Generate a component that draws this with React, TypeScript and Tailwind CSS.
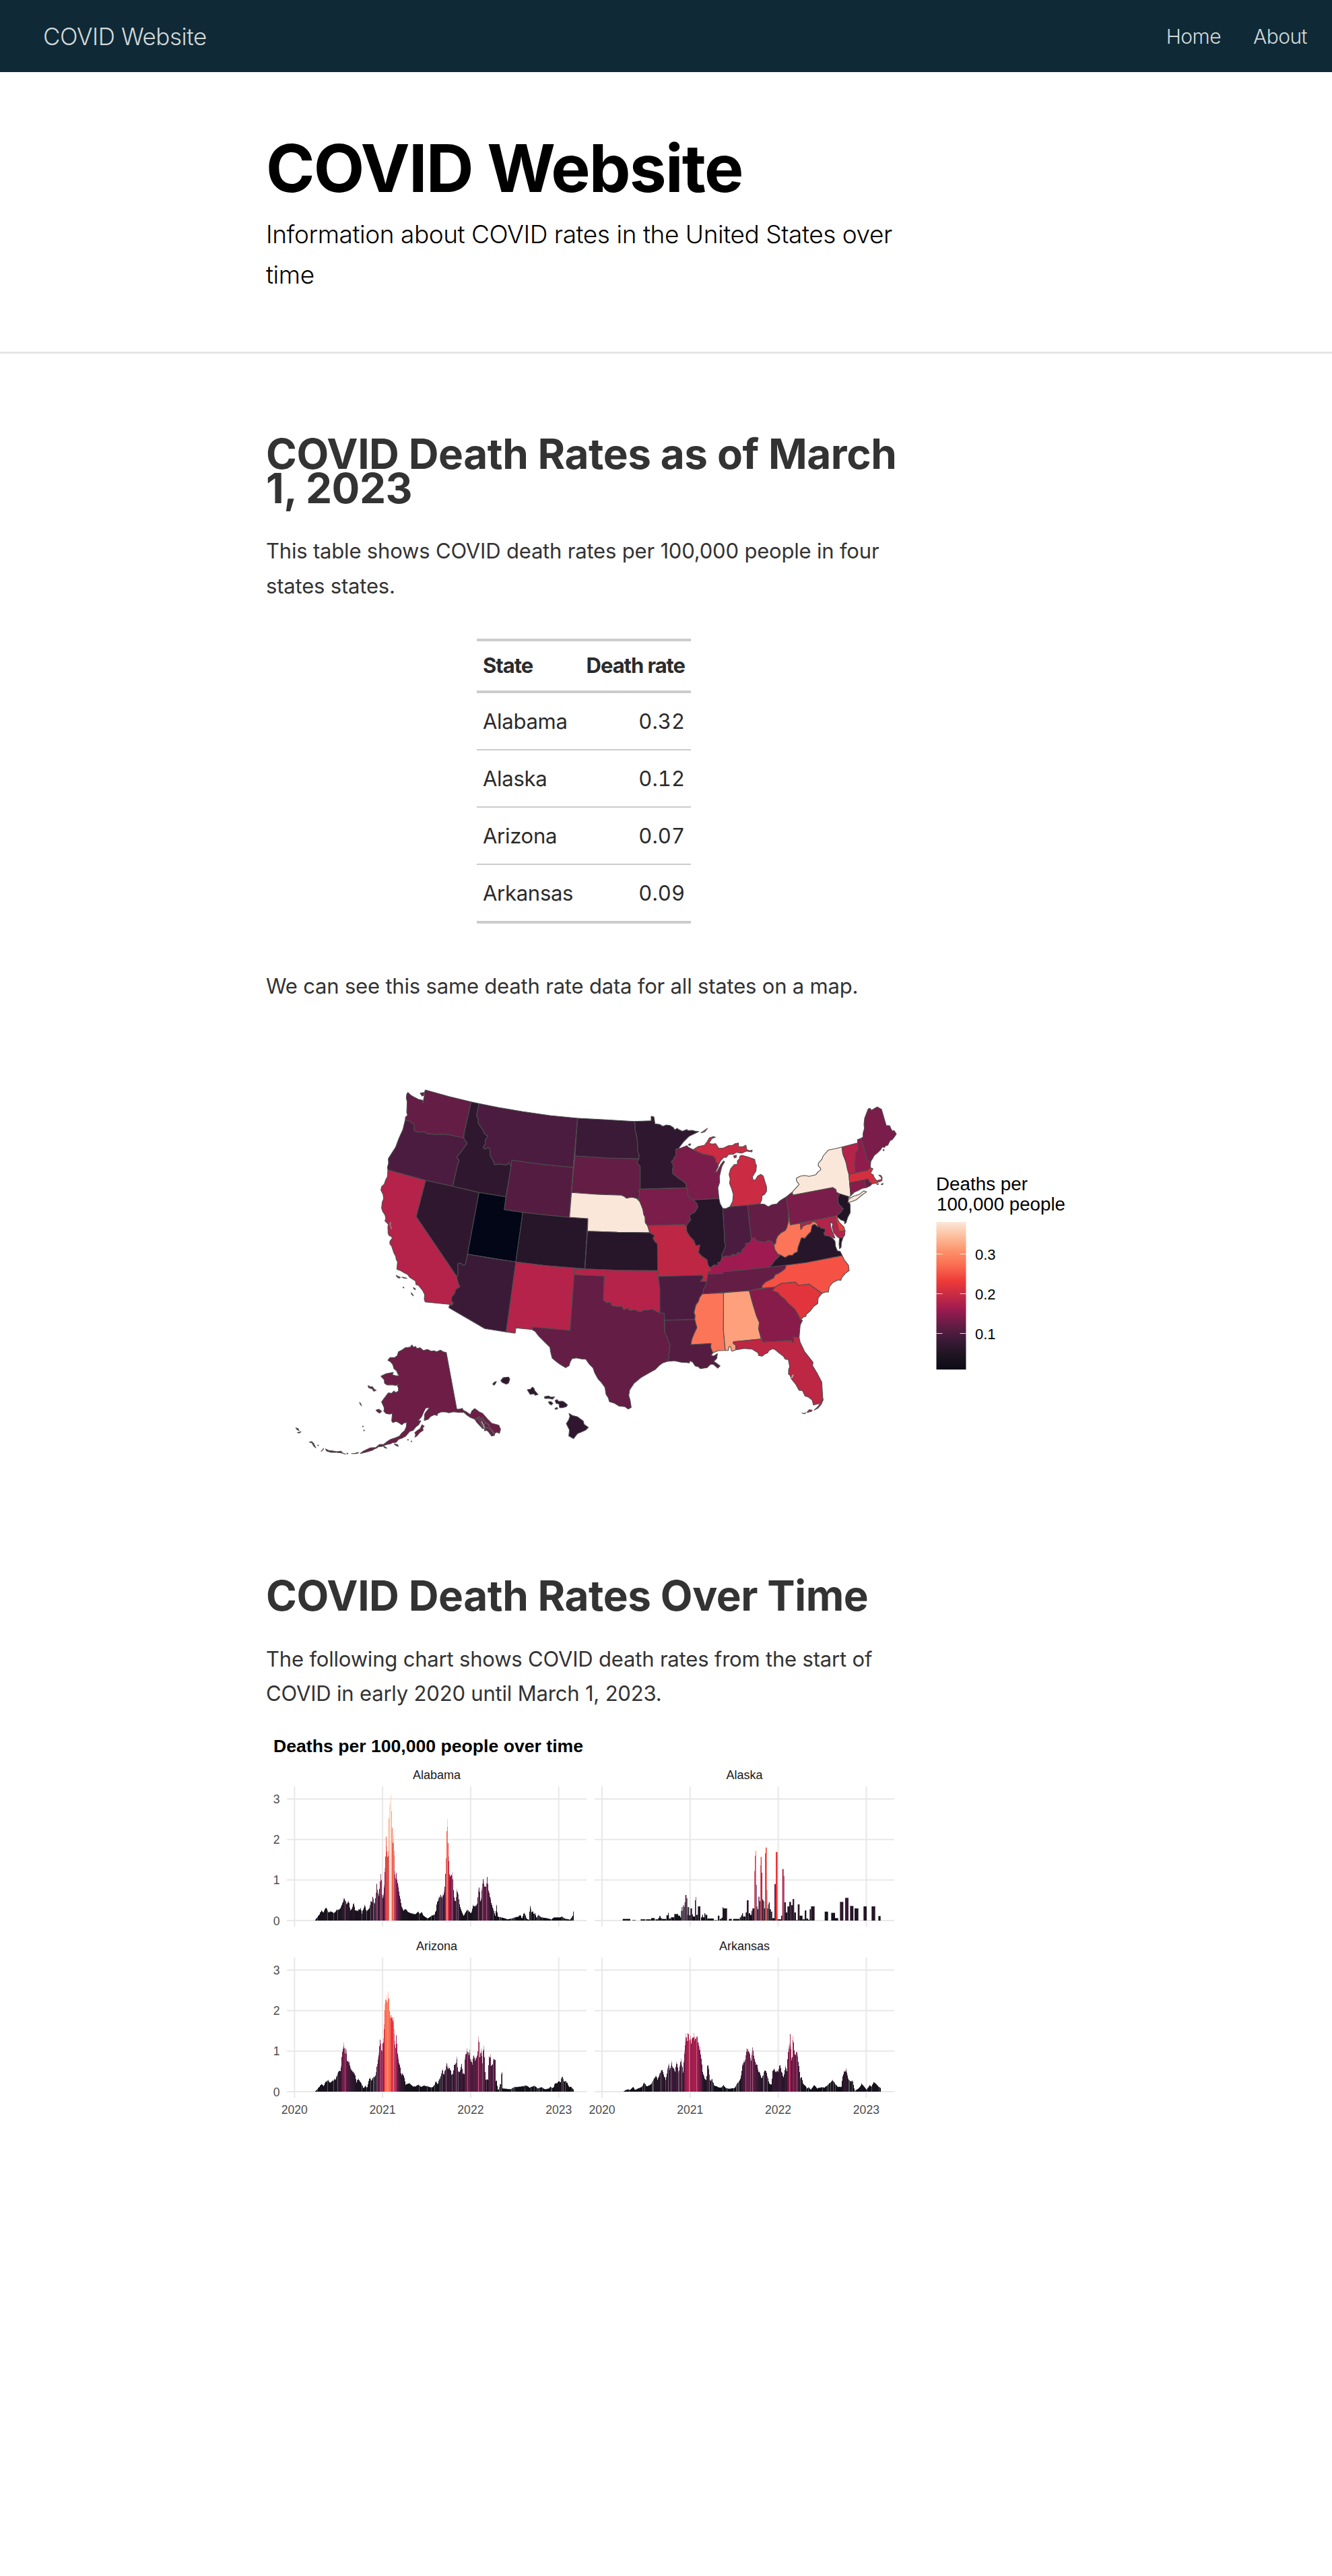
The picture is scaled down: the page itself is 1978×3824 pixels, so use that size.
import React from "react";

type Shape = { n: string; f: string; d: string };

// Each group of outlines is drafted on its own tile of the map sheet.
const tiles: { x: number; y: number; shapes: Shape[] }[] = [
  {
    x: 0,
    y: 0,
    shapes: [
      { n: "WA", f: "#641d45", d: "617,125 612,133 610,150 614,165 613,190 612,215 616,226 606,236 606,245 613,251 625,252 633,260 643,264 646,280 643,292 657,301 675,302 690,299 703,310 715,309 738,313 765,311 795,313 866,328 868,305 899,167 800,143 695,114 691,125 690,142 684,172 682,160 665,156 645,146 630,137" },
      { n: "WA-I", f: "#641d45", d: "672,128 688,125 688,138 680,141" },
      { n: "OR", f: "#4b1c40", d: "606,245 613,251 625,252 633,260 643,264 646,280 643,292 657,301 675,302 690,299 703,310 715,309 738,313 765,311 795,313 866,328 870,336 880,348 880,354 862,378 850,396 837,409 837,417 846,428 838,450 817,543 696,517 528,470 526,460 531,440 530,420 545,396 562,370 577,330 595,290" },
      { n: "ID", f: "#2f182f", d: "899,167 934,175 923,228 930,240 931,264 950,290 960,310 973,318 961,340 963,352 953,370 960,377 977,370 984,385 984,405 990,418 997,430 1003,447 1025,443 1045,447 1060,446 1067,437 1077,455 1054,590 934,571 817,543 838,450 846,428 837,417 837,409 850,396 862,378 880,354 880,348 870,336 866,328 868,305" },
      { n: "MT", f: "#4b1c40", d: "934,175 1020,192 1130,211 1250,228 1373,240 1354,459 1220,446 1081,427 1077,455 1067,437 1060,446 1045,447 1025,443 1003,447 997,430 990,418 984,405 984,385 977,370 960,377 953,370 963,352 961,340 973,318 960,310 950,290 931,264 930,240 923,228" },
      { n: "WY", f: "#551c41", d: "1081,427 1220,446 1354,459 1345,571 1336,681 1240,672 1129,659 1046,647" },
      { n: "NV", f: "#2f182f", d: "696,517 817,543 934,571 883,845 874,890 866,895 850,885 840,888 840,940 835,945 654,678" },
      { n: "UT", f: "#020617", d: "934,571 1054,590 1046,647 1129,659 1098,880 883,845" },
      { n: "CO", f: "#27152a", d: "1129,659 1240,672 1336,681 1419,687 1405,910 1360,907 1230,896 1098,880" },
      { n: "CA", f: "#b5234a", d: "528,470 696,517 654,678 835,945 838,960 843,977 849,990 830,1003 826,1020 812,1037 811,1055 819,1060 817,1070 694,1058 690,1045 692,1025 683,1007 665,985 653,980 651,965 635,955 625,948 615,935 600,928 585,919 568,913 571,880 565,868 563,855 555,840 545,810 537,800 537,788 547,775 545,767 534,763 529,752 528,725 530,712 515,697 519,686 515,670 505,655 500,640 503,613 509,600 507,580 497,560 500,545 512,533 518,515 526,500" },
      { n: "AZ", f: "#3b1a38", d: "883,845 990,864 1098,880 1055,1192 960,1177 800,1084 802,1073 817,1070 819,1060 811,1055 812,1037 826,1020 830,1003 849,990 843,977 838,960 835,945 840,940 840,888 850,885 866,895 874,890" },
      { n: "NM", f: "#b5234a", d: "1098,880 1230,896 1361,907 1340,1185 1172,1170 1174,1181 1098,1174 1095,1197 1055,1192" },
      { n: "CI1", f: "#b5234a", d: "565,940 575,945 583,948 581,952 572,950" },
      { n: "CI2", f: "#b5234a", d: "590,948 600,949 613,953 600,952" },
      { n: "CI3", f: "#b5234a", d: "642,994 650,999 650,1004 643,999" },
      { n: "CI4", f: "#b5234a", d: "632,1017 640,1027 641,1031 634,1024" },
      { n: "CI5", f: "#b5234a", d: "595,992 600,993 598,996" },
    ],
  },
  {
    x: 1260,
    y: 0,
    shapes: [
      { n: "ND", f: "#3b1a38", d: "113,240 240,247 366,254 370,270 369,290 376,315 380,345 381,385 388,405 386,421 240,417 101,408" },
      { n: "SD", f: "#641d45", d: "101,408 240,417 386,421 377,438 392,454 392,556 386,562 390,580 385,601 374,596 355,592 330,596 322,589 308,583 200,579 86,571" },
      { n: "NE", f: "#fbe7d9", d: "86,571 200,579 308,583 322,589 330,596 355,592 374,596 392,612 396,625 404,645 408,668 414,680 415,705 425,718 435,750 290,748 157,743 159,687 77,681" },
      { n: "KS", f: "#27152a", d: "157,743 290,748 435,750 445,756 457,762 449,774 458,790 469,799 470,919 300,917 146,911" },
      { n: "MN", f: "#2f182f", d: "366,254 441,251 441,231 453,234 458,265 480,268 493,276 508,270 525,272 540,282 546,292 556,285 565,291 580,298 600,290 605,295 625,294 635,297 653,299 610,320 585,345 562,375 551,378 551,408 544,413 540,425 531,433 540,450 536,470 538,488 550,496 563,507 580,518 595,531 599,550 392,556 392,454 377,438 386,421 388,405 381,385 380,345 376,315 369,290 370,270" },
      { n: "IA", f: "#7a1d4a", d: "386,556 599,550 605,565 603,577 610,592 629,604 645,620 649,635 636,658 615,670 612,680 618,692 603,710 598,722 588,713 425,718 415,705 414,680 408,668 404,645 396,625 385,601 390,580" },
      { n: "MO", f: "#bd2744", d: "425,718 588,713 598,722 600,745 615,768 632,785 640,808 658,804 652,838 668,855 690,870 695,895 708,906 708,932 694,934 690,965 660,967 674,949 667,939 473,945 470,919 469,799 458,790 449,774 457,762 445,756 435,750" },
      { n: "WI", f: "#7a1d4a", d: "551,378 575,372 600,362 607,370 628,380 650,390 672,400 700,405 715,407 728,420 728,435 738,440 740,455 732,470 725,484 735,476 745,458 752,445 764,430 768,434 757,452 752,470 745,500 746,525 738,550 743,598 629,604 610,592 603,577 605,565 599,550 595,531 580,518 563,507 550,496 538,488 536,470 540,450 531,433 540,425 544,413 551,408" },
      { n: "IL", f: "#27152a", d: "629,604 743,598 748,620 760,642 768,770 767,790 773,805 765,830 756,845 756,862 750,880 739,882 738,897 725,893 715,897 706,907 695,895 690,870 668,855 652,838 658,804 640,808 632,785 615,768 600,745 598,722 603,710 618,692 612,680 615,670 636,658 649,635 645,620" },
      { n: "IN", f: "#4b1c40", d: "760,642 775,642 792,634 870,627 887,773 885,788 875,797 863,797 862,812 848,824 842,840 828,838 818,850 805,845 793,856 778,853 756,860 756,845 765,830 773,805 767,790 768,770" },
      { n: "MI-U", f: "#cb2b43", d: "628,380 650,366 678,360 690,345 700,328 718,322 727,325 712,330 698,352 712,355 728,353 742,374 765,372 785,362 805,360 815,353 830,350 830,366 850,367 863,360 867,380 880,385 891,382 890,390 865,386 845,395 820,392 808,400 785,402 775,415 765,413 750,430 737,455 738,440 728,435 728,420 715,407 700,405 672,400 650,390" },
      { n: "IR", f: "#cb2b43", d: "663,305 680,293 692,285 680,300" },
      { n: "BI", f: "#cb2b43", d: "808,408 820,404 820,414 812,417" },
      { n: "AP", f: "#7a1d4a", d: "607,357 615,353 617,358 611,362" },
    ],
  },
  {
    x: 1260,
    y: 810,
    shapes: [
      { n: "TX", f: "#641d45", d: "98,127 232,133 228,240 243,252 260,249 265,263 280,267 295,268 310,268 320,283 335,276 347,286 358,284 365,282 378,288 392,292 410,284 425,284 445,280 465,290 480,297 499,298 501,385 512,405 516,420 527,440 522,455 523,470 518,480 521,495 512,513 492,520 478,530 460,548 430,565 395,585 365,610 345,640 341,665 347,685 352,718 338,725 325,715 298,712 275,698 255,692 250,675 240,660 235,628 218,605 205,592 190,565 182,542 165,525 150,503 130,502 107,497 88,501 80,515 75,532 60,541 35,526 20,515 0,498 -7,470 -10,450 -35,425 -60,400 -75,380 -88,372 -88,360 80,375" },
      { n: "OK", f: "#b5234a", d: "103,100 146,101 300,107 470,109 473,135 480,190 480,297 465,290 445,280 425,284 410,284 392,292 378,288 365,282 358,284 347,286 335,276 320,283 310,268 295,268 280,267 265,263 260,249 243,252 228,240 232,133 98,127" },
      { n: "AR", f: "#4b1c40", d: "473,135 667,129 674,139 660,157 690,156 686,172 675,192 672,212 657,228 652,245 640,262 632,295 637,310 635,326 501,330 499,298 480,297 480,190" },
      { n: "LA", f: "#551c41", d: "501,330 635,326 645,362 632,390 622,415 618,438 708,433 706,450 716,475 708,487 720,489 736,478 733,500 720,513 733,522 748,533 738,543 732,538 718,526 705,526 690,541 660,545 650,536 637,533 625,515 612,510 612,520 600,518 575,517 545,510 512,513 521,495 518,480 523,470 522,455 527,440 516,420 512,405 501,385" },
      { n: "MS", f: "#fc7559", d: "669,212 764,208 763,375 771,464 740,465 716,475 706,450 708,433 618,438 622,415 632,390 645,362 635,326 637,310 632,295 640,262 652,245 657,228" },
      { n: "AL", f: "#ffa07c", d: "766,207 878,198 890,245 910,310 923,340 920,370 927,395 930,413 808,425 806,432 818,440 817,462 803,467 798,465 795,448 788,447 785,464 771,464 763,375 763,212" },
    ],
  },
  {
    x: 2040,
    y: 780,
    shapes: [
      { n: "KY", f: "#9e1a50", d: "-72,127 -65,117 -55,113 -42,117 -41,102 -30,100 -24,80 -2,73 13,76 25,65 38,70 48,58 62,60 68,44 82,32 83,17 95,17 105,8 107,-7 122,-8 130,4 150,10 165,13 185,3 205,18 208,28 212,45 225,63 235,68 212,93 200,112 182,124 60,137 -18,144 -20,152 -86,154 -86,145 -72,142" },
      { n: "TN", f: "#641d45", d: "-86,154 -20,152 -18,144 60,137 182,124 262,114 258,130 243,142 225,153 215,155 206,172 185,182 170,190 155,206 155,216 98,227 -108,242 -106,222 -94,202" },
      { n: "NC", f: "#f55145", d: "155,216 155,206 170,190 185,182 206,172 215,155 225,153 243,142 258,130 262,114 350,103 512,71 522,92 540,115 543,138 525,152 510,170 506,182 493,180 470,192 455,210 450,235 440,233 422,240 365,199 315,205 309,194 300,190 240,196 212,212" },
      { n: "SC", f: "#e1343c", d: "212,212 240,196 300,190 309,194 315,205 365,199 422,240 405,260 403,285 386,297 370,318 352,333 350,343 340,345 328,357 313,330 300,310 275,288 255,265 237,252 225,237 200,228" },
      { n: "GA", f: "#871c4a", d: "98,227 155,218 212,212 200,228 225,237 237,252 255,265 275,288 300,310 313,330 326,357 335,360 325,380 323,400 320,437 294,434 297,455 290,460 285,449 158,457 147,425 140,400 143,370 130,340 115,290" },
      { n: "FL", f: "#bd2744", d: "28,455 150,443 158,457 285,449 290,460 297,455 294,434 320,437 325,458 345,500 382,547 380,562 400,595 421,635 425,700 427,715 418,730 400,733 384,737 378,715 362,702 346,697 335,673 320,672 305,645 285,620 280,605 273,600 273,580 278,567 272,535 258,533 250,520 230,505 212,490 200,487 185,495 180,505 167,510 155,520 140,517 137,505 110,488 75,485 40,491 38,470 28,465" },
      { n: "K1", f: "#bd2744", d: "427,713 418,735 405,750 387,760 403,745" },
      { n: "K2", f: "#bd2744", d: "355,770 365,758 378,760 375,766" },
      { n: "K3", f: "#bd2744", d: "333,773 345,776 350,772 342,775" },
    ],
  },
  {
    x: 2040,
    y: 60,
    shapes: [
      { n: "OH", f: "#641d45", d: "90,567 145,561 165,563 183,574 200,565 220,562 235,547 263,530 273,605 273,640 265,668 258,680 240,690 225,705 217,722 215,740 207,742 205,735 185,723 165,733 150,730 130,724 122,712 107,715" },
      { n: "MI-L", f: "#cb2b43", d: "12,574 24,550 27,520 20,495 10,470 13,450 8,430 15,405 30,387 45,385 45,370 55,360 55,350 65,345 90,352 122,363 125,380 130,390 128,415 112,440 115,455 125,455 135,438 150,430 160,437 170,470 175,485 175,505 165,520 155,525 153,545 145,561 90,567" },
      { n: "VA", f: "#27152a", d: "182,844 200,832 212,813 237,789 258,800 275,790 290,790 300,780 312,775 315,755 330,712 345,715 360,697 372,685 378,657 390,652 403,664 412,658 415,668 435,673 437,683 430,692 435,702 455,705 470,715 480,728 482,750 490,770 503,773 512,791 350,823 262,834" },
      { n: "VA-E", f: "#27152a", d: "500,712 516,710 508,735 507,755 500,761 498,740" },
      { n: "WV", f: "#fc7559", d: "271,603 281,655 325,648 328,675 338,660 355,652 370,650 380,640 393,642 403,652 403,664 390,652 378,657 372,685 360,697 345,715 330,712 315,755 312,775 300,780 290,790 275,790 258,800 237,789 225,785 212,765 208,745 217,735 217,722 225,705 240,690 258,680 265,668 273,640" },
      { n: "MD", f: "#b5234a", d: "325,648 482,615 498,685 525,680 523,700 516,710 500,714 490,708 485,702 475,690 467,665 470,650 462,645 466,632 459,645 461,665 468,685 475,700 480,714 468,710 455,705 435,702 430,692 437,683 435,673 415,668 412,658 403,664 403,652 393,642 380,640 370,650 355,652 338,660 328,675" },
      { n: "DE", f: "#e83b3d", d: "481,614 490,612 490,625 500,645 520,665 524,681 498,685" },
      { n: "PA", f: "#7a1d4a", d: "263,530 290,508 292,522 470,488 484,497 487,510 500,517 492,540 497,563 517,583 505,600 490,612 481,615 281,655" },
      { n: "NJ", f: "#201426", d: "500,516 541,529 538,553 547,562 548,600 537,620 529,645 523,650 522,638 505,632 490,619 490,612 505,600 517,583 497,563 492,540" },
      { n: "NY", f: "#fbe7d9", d: "292,522 290,508 320,475 308,458 308,447 325,438 345,435 365,439 395,431 405,418 416,410 416,403 405,392 406,380 422,362 427,348 450,322 480,316 511,308 515,340 525,365 530,380 535,405 542,430 545,467 550,520 545,533 541,529 500,516 487,510 484,497 470,488" },
      { n: "NY-L", f: "#fbe7d9", d: "540,541 560,528 590,518 608,503 620,508 600,522 575,543 552,552 537,556" },
      { n: "CT", f: "#871c4a", d: "545,467 612,453 618,489 600,493 580,503 565,510 550,525" },
      { n: "RI", f: "#641d45", d: "612,453 628,450 632,460 645,472 638,480 618,490" },
      { n: "MA", f: "#d52f3f", d: "542,430 625,412 637,400 649,405 638,425 650,432 655,445 665,458 687,452 687,445 675,433 685,435 690,445 689,458 672,465 660,470 645,472 632,460 628,450 545,467" },
      { n: "VT", f: "#b5234a", d: "511,308 581,290 584,322 571,335 571,355 568,385 572,422 542,430 535,405 530,380 525,365 515,340" },
      { n: "NH", f: "#911b4c", d: "581,290 580,275 595,270 607,305 622,360 638,383 637,400 625,412 572,422 568,385 571,355 571,335 584,322" },
      { n: "ME", f: "#7a1d4a", d: "595,270 605,264 605,247 611,225 609,208 612,180 628,138 636,136 642,145 668,130 687,140 708,212 723,213 730,228 735,237 743,235 753,250 745,262 735,275 725,280 715,300 705,303 700,310 690,308 683,320 670,333 655,345 648,358 640,370 638,383 622,360 607,305" },
      { n: "I1", f: "#7a1d4a", d: "694,319 699,322 696,325" },
      { n: "I2", f: "#d52f3f", d: "665,472 675,472 670,476" },
      { n: "I3", f: "#d52f3f", d: "685,474 694,470 692,476" },
    ],
  },
  {
    x: 0,
    y: 900,
    shapes: [
      { n: "AK", f: "#6d1d46", d: "635,350 643,360 652,356 656,365 672,362 685,374 705,370 720,377 735,376 745,380 762,373 775,380 788,383 835,636 847,635 860,632 863,640 878,648 895,660 903,643 915,633 935,648 950,655 972,680 990,698 1022,707 1030,725 1025,743 1012,738 1003,745 1003,752 990,755 975,735 965,728 960,733 957,720 950,722 925,695 915,680 895,672 880,662 867,650 845,650 820,647 800,652 785,648 765,648 750,655 747,664 735,660 718,668 708,680 690,686 692,655 712,630 705,628 695,637 685,655 685,662 663,686 675,688 665,705 652,715 640,730 625,735 608,755 590,765 575,770 565,783 548,785 540,790 523,793 510,798 500,802 485,803 480,808 470,812 460,818 430,827 405,833 420,822 450,808 475,806 490,793 510,792 525,780 540,770 565,762 580,755 590,742 602,732 610,715 612,695 600,697 590,705 575,695 565,690 550,695 545,688 548,655 535,658 520,655 510,645 512,630 500,603 508,592 515,583 530,563 545,565 555,555 563,562 575,555 575,540 570,532 577,523 563,530 550,527 525,528 513,520 512,505 497,489 520,478 552,472 548,482 560,486 578,487 572,478 567,465 555,455 550,437 540,425 528,418 537,406 560,405 570,397 575,380 590,373 605,362 628,359" },
      { n: "AK1", f: "#6d1d46", d: "648,740 660,730 672,722 680,705 690,712 683,718 685,730 670,740 657,755 648,760 652,750" },
      { n: "AK2", f: "#6d1d46", d: "440,530 450,537 458,535 468,548 476,551 466,556 458,545 442,540" },
      { n: "AK3", f: "#6d1d46", d: "475,640 488,636 500,645 492,653 482,648" },
      { n: "AK4", f: "#6d1d46", d: "402,605 407,612 411,620 405,614" },
      { n: "AK5", f: "#6d1d46", d: "118,719 128,722 132,731 124,727" },
      { n: "AK6", f: "#6d1d46", d: "125,740 133,738 141,736 133,742" },
      { n: "AK7", f: "#6d1d46", d: "178,782 188,780 197,788 203,800 207,808 198,800 190,786" },
      { n: "AK8", f: "#6d1d46", d: "230,823 240,815 241,810 236,820" },
      { n: "AK9", f: "#6d1d46", d: "250,813 265,820 285,822 300,825 320,823 325,830 340,836 320,830 300,828 275,828 255,822" },
      { n: "AK10", f: "#6d1d46", d: "366,833 378,834 385,831 398,829 390,833" },
      { n: "AK11", f: "#6d1d46", d: "415,711 419,712 416,714" },
      { n: "AK12", f: "#6d1d46", d: "420,728 424,731 421,732" },
      { n: "AK13", f: "#6d1d46", d: "508,800 518,805 523,810 512,806" },
      { n: "AK14", f: "#6d1d46", d: "556,790 572,794 574,801 565,798" },
      { n: "AK15", f: "#6d1d46", d: "632,777 635,779 632,781" },
      { n: "AK16", f: "#6d1d46", d: "617,770 620,773 616,773" },
      { n: "AK17", f: "#6d1d46", d: "345,832 350,832 347,835" },
      { n: "AK18", f: "#6d1d46", d: "215,796 219,796 217,799" },
      { n: "HI1", f: "#2f182f", d: "995,524 1003,515 1011,512 1008,520 1001,529" },
      { n: "HI2", f: "#2f182f", d: "1031,508 1042,495 1066,493 1071,502 1065,520 1055,524 1038,517" },
      { n: "HI3", f: "#2f182f", d: "1149,549 1163,547 1172,537 1180,545 1182,553 1197,570 1185,574 1178,567 1162,570" },
      { n: "HI4", f: "#2f182f", d: "1226,580 1245,577 1252,582 1271,581 1262,591 1245,587 1227,588" },
      { n: "HI5", f: "#2f182f", d: "1243,603 1255,602 1263,610 1256,617 1248,612" },
      { n: "HI6", f: "#2f182f", d: "1273,597 1282,593 1288,601 1305,600 1315,605 1328,617 1322,625 1305,629 1293,629 1290,612 1278,610" },
      { n: "HI7", f: "#2f182f", d: "1272,633 1281,628 1285,633 1277,637" },
      { n: "HI8", f: "#2f182f", d: "1335,655 1350,664 1373,670 1398,688 1402,703 1421,717 1410,728 1390,737 1372,745 1355,767 1334,755 1337,728 1323,700 1333,685 1339,668" },
    ],
  },
];

// Inner straits of the Alaskan panhandle and small bays.
const inlets = [
  "M915,1582 L935,1570 L948,1590 L955,1605 L962,1625",
  "M928,1575 L940,1595 L948,1615 L957,1620",
  "M948,1572 L960,1592 L975,1605 L985,1622 L1005,1645",
  "M950,1610 L965,1598 L980,1604",
  "M962,1615 L985,1625 L1003,1650",
];

const ramp = [
  [12, 11, 22], [29, 21, 32], [59, 26, 56], [100, 29, 69], [154, 26, 80], [197, 42, 69],
  [238, 58, 56], [249, 106, 80], [253, 144, 105], [253, 189, 155], [251, 231, 217],
];

function tone(v: number) {
  const t = Math.min(0.9999, Math.max(0, v / 3.15)) * 10;
  const i = Math.floor(t);
  const c = ramp[i].map((a, k) => Math.round(a + (ramp[i + 1][k] - a) * (t - i)));
  return `rgb(${c[0]},${c[1]},${c[2]})`;
}

function DeathMap() {
  return (
    <svg className="block h-[760px] w-[1227px]" viewBox="395 1500 1227 760">
      <defs>
        <linearGradient id="ramp" x1="0" y1="1" x2="0" y2="0">
          {ramp.map((c, i) => (
            <stop key={i} offset={i / 10} stopColor={`rgb(${c[0]},${c[1]},${c[2]})`} />
          ))}
        </linearGradient>
      </defs>
      <g transform="translate(400 1580) scale(0.33333)" stroke="#4d4d4d" strokeWidth="3.2" strokeLinejoin="round">
        {tiles.map((t, i) => (
          <g key={i} transform={`translate(${t.x} ${t.y})`}>
            {t.shapes.map((s) => (
              <polygon key={s.n} points={s.d} fill={s.f} />
            ))}
          </g>
        ))}
        <g fill="none">
          {inlets.map((d, i) => (
            <path key={i} d={d} stroke="#5a5556" strokeWidth="5" />
          ))}
          <path d="M945,1590 L953,1606 L958,1619" stroke="#ddd" strokeWidth="3" />
          <path d="M700,1532 L690,1552 L682,1570" stroke="#fff" strokeWidth="5" />
        </g>
        <path d="M541,703 L537,712 L541,720 M540,722 L545,733" fill="none" stroke="#999" strokeWidth="4" />
        <path d="M2326,1398 L2334,1382" fill="none" stroke="#aaa" strokeWidth="6" />
      </g>
      <g fontFamily="'Liberation Sans', Arial, sans-serif" fill="#000">
        <text x="1390" y="1767" fontSize="27" textLength="136" lengthAdjust="spacingAndGlyphs">Deaths per</text>
        <text x="1391" y="1797" fontSize="27" textLength="191" lengthAdjust="spacingAndGlyphs">100,000 people</text>
        <rect x="1390.5" y="1814" width="44" height="219" fill="url(#ramp)" />
        {[["0.3", 1861.5], ["0.2", 1920.5], ["0.1", 1979.5]].map(([s, y]) => (
          <g key={s}>
            <path d={`M1390.5,${y} h9 M1425.5,${y} h9`} stroke="#fff" strokeOpacity="0.85" strokeWidth="1" />
            <text x="1448" y={Number(y) + 8} fontSize="22">{s}</text>
          </g>
        ))}
      </g>
    </svg>
  );
}

// Pairs of (time position in chart units, rate); 392.4 units make one year.
type Series = { name: string; steps?: boolean; pts: number[] };

const alabama: Series = {
  name: "Alabama",
  pts: [232,0, 240,.06, 250,.13, 262,.25, 270,.2, 282,.34, 292,.2, 305,.23, 320,.18, 330,.27, 340,.26, 350,.34, 357,.48, 366,.55, 373,.4, 383,.5, 390,.25, 398,.3, 405,.46, 412,.25, 425,.25, 436,.3, 442,.18, 448,.28, 455,.38, 463,.22, 475,.3, 482,.5, 486,.42, 491,.62, 498,.35, 508,.88, 516,.58, 520,.8, 527,1.24, 531,.72, 536,.5, 541,.85, 545,1.32, 550,2.1, 554,1.6, 560,1.55, 562,2.6, 566,3.15, 572,3, 576,2.45, 579,1.95, 584,2.1, 587,1.3, 590,1.0, 594,1.18, 600,.98, 607,.75, 614,.5, 620,.33, 628,.24, 636,.3, 650,.2, 665,.17, 680,.16, 692,.22, 700,.16, 708,.22, 716,.12, 735,.05, 750,.11, 765,.15, 772,.25, 776,.45, 784,.55, 792,.63, 800,.55, 808,.7, 813,.9, 815,1.55, 819,1.55, 821,2.75, 825,2.05, 828,1.55, 832,1.2, 838,1.1, 842,1.22, 848,.95, 852,.6, 858,.45, 866,.74, 871,.66, 876,.42, 885,.25, 895,.12, 905,.22, 911,.27, 920,.22, 930,.18, 936,.36, 946,.36, 954,.38, 960,.72, 966,.84, 971,.4, 976,.75, 980,1.06, 988,.84, 996,.9, 1000,1.05, 1005,.8, 1012,.62, 1020,.4, 1028,.27, 1036,.12, 1042,.36, 1047,.1, 1060,.08, 1075,.06, 1090,.03, 1110,.05, 1125,.08, 1140,.1, 1148,.15, 1155,.04, 1163,.2, 1170,.14, 1176,.04, 1186,.02, 1191,.38, 1198,.2, 1203,.26, 1206,.17, 1214,.18, 1220,.06, 1228,.14, 1240,.08, 1265,.06, 1285,.03, 1300,.08, 1325,.08, 1332,.1, 1345,.05, 1370,.02, 1376,.08, 1382,.12, 1386,.3],
};

const arizona: Series = {
  name: "Arizona",
  pts: [232,0, 242,.05, 252,.12, 262,.19, 272,.14, 280,.25, 292,.27, 300,.22, 312,.28, 325,.3, 333,.44, 340,.5, 348,.52, 352,.85, 357,1.12, 362,1.1, 367,1.0, 371,1.05, 376,.78, 384,.75, 390,.6, 398,.52, 406,.48, 412,.4, 418,.23, 423,.32, 433,.26, 442,.17, 450,.08, 458,.15, 465,.08, 471,.24, 477,.35, 484,.27, 493,.36, 500,.34, 508,.6, 515,.8, 519,1.1, 524,1.36, 529,1.0, 534,1.12, 539,1.3, 543,1.9, 547,2.35, 552,2.25, 558,2.2, 562,2.38, 566,2.0, 570,1.85, 576,1.83, 584,1.8, 587,1.2, 591,1.05, 596,1.44, 600,1.0, 606,.75, 611,.68, 617,.42, 624,.45, 630,.36, 637,.18, 645,.2, 655,.2, 668,.13, 680,.13, 692,.17, 705,.12, 718,.15, 735,.13, 755,.1, 765,.17, 772,.26, 779,.18, 786,.3, 793,.37, 800,.55, 807,.4, 815,.6, 820,.68, 826,.55, 833,.62, 842,.42, 848,.43, 852,.66, 860,.7, 865,.78, 870,.5, 877,.48, 886,.7, 892,.46, 898,.46, 902,.95, 906,.93, 910,1.03, 915,.95, 922,.95, 928,.75, 934,.7, 940,.9, 947,.78, 953,.85, 958,1.05, 962,1.4, 967,.9, 973,1.03, 979,.75, 984,1.15, 988,.85, 991,.5, 994,.31, 1004,.29, 1007,.88, 1015,.88, 1017,.66, 1023,.66, 1026,.78, 1036,.8, 1038,.27, 1044,.26, 1046,.04, 1052,.06, 1056,.18, 1060,.18, 1062,.46, 1066,.46, 1068,.08, 1085,.07, 1105,.06, 1120,.11, 1140,.12, 1160,.14, 1176,.15, 1190,.1, 1210,.15, 1225,.08, 1242,.11, 1258,.06, 1275,.08, 1283,.13, 1290,.08, 1298,.12, 1301,.21, 1314,.22, 1318,.27, 1328,.24, 1331,.36, 1338,.35, 1341,.24, 1347,.27, 1357,.22, 1364,.12, 1374,.12, 1386,.04],
};

const arkansas: Series = {
  name: "Arkansas",
  pts: [164,0, 176,.04, 186,.06, 195,.04, 208,.12, 217,.04, 230,.08, 247,.12, 257,.22, 270,.13, 280,.16, 290,.2, 300,.3, 310,.38, 318,.3, 328,.45, 338,.54, 346,.4, 354,.28, 360,.5, 366,.68, 371,.55, 379,.7, 388,.58, 395,.52, 403,.74, 411,.45, 416,.6, 421,.82, 426,.65, 431,.5, 436,.85, 440,1.2, 444,1.35, 448,1.3, 454,1.5, 458,1.3, 464,1.25, 470,1.3, 475,1.34, 480,1.38, 486,1.28, 491,1.43, 496,1.25, 502,1.1, 509,.95, 514,.75, 519,.45, 527,.32, 535,.3, 540,.78, 545,.55, 551,.28, 560,.3, 570,.15, 580,.14, 590,.1, 600,.1, 611,.16, 620,.1, 630,.07, 645,.08, 660,.09, 672,.2, 684,.28, 689,.4, 694,.62, 700,.7, 706,.75, 712,.95, 720,1.05, 727,.95, 734,.75, 740,1.08, 748,.85, 755,.7, 761,.65, 767,.5, 775,.45, 780,.32, 789,.45, 799,.57, 807,.36, 815,.2, 825,.18, 829,.5, 835,.56, 843,.5, 854,.52, 862,.7, 870,.5, 879,.35, 886,.65, 893,.52, 898,1.05, 904,1.05, 908,1.38, 912,.95, 916,.7, 920,1.28, 924,1.2, 930,.85, 936,1.05, 942,.8, 948,.6, 953,.32, 959,.37, 966,.18, 975,.16, 983,.08, 990,.11, 1000,.05, 1015,.17, 1028,.08, 1045,.11, 1060,.1, 1075,.16, 1086,.22, 1097,.27, 1110,.18, 1120,.12, 1136,.12, 1142,.4, 1150,.5, 1159,.54, 1165,.33, 1175,.25, 1186,.27, 1191,.15, 1195,.02, 1208,.06, 1218,.12, 1227,.2, 1236,.14, 1248,.05, 1262,.16, 1270,.12, 1280,.24, 1290,.2, 1300,.13, 1313,.08],
};

// Alaska reports in bursts: (start, end, rate) triples.
const alaska: Series = {
  name: "Alaska",
  steps: true,
  pts: [164,198,.04, 207,222,.01, 244,265,.03, 268,290,.03, 291,307,.06, 310,322,.03, 322,338,.06, 327,333,.11, 338,358,.04, 359,370,.13, 366,369,.19, 370,378,.05, 379,394,.08, 394,411,.16, 411,420,.12, 420,425,.08, 424,427,.24, 427,430,.33, 430,433,.24, 433,436,.38, 436,440,.34, 440,443,.45, 443,448,.63, 448,452,.55, 452,455,.14, 454,460,.33, 460,466,.13, 466,473,.3, 473,477,.15, 477,486,.1, 486,489,.5, 489,491,.58, 491,499,.14, 499,510,.35, 513,528,.08, 518,522,.14, 528,532,.18, 532,541,.14, 541,570,.05, 572,586,.01, 588,595,.12, 597,604,.04, 604,609,.07, 609,612,.33, 612,629,.3, 637,650,.04, 656,685,.04, 686,692,.08, 692,696,.13, 696,700,.18, 700,711,.1, 712,717,.2, 717,725,.5, 725,732,.18, 732,742,.14, 738,742,.24, 742,751,.3, 751,753,1.22, 753,756,1.6, 756,758,1.72, 758,761,.88, 761,764,.35, 764,769,.28, 769,773,.59, 773,777,.48, 777,779,1.36, 779,783,1.57, 783,786,1.18, 786,790,.52, 790,794,.48, 794,798,.3, 798,801,1.66, 801,806,1.8, 806,808,.75, 808,812,.3, 812,815,.4, 815,819,.45, 819,824,.28, 824,830,.22, 830,840,.06, 840,846,.9, 846,854,1.69, 854,870,.03, 870,875,.12, 875,881,1.27, 881,884,1.1, 884,891,.45, 891,898,.2, 898,906,.35, 906,914,.46, 914,921,.38, 921,928,.53, 928,936,.2, 936,944,.01, 944,952,.4, 952,965,.12, 965,975,.03, 975,982,.25, 982,990,.05, 990,997,.02, 997,1003,.28, 1003,1019,.35, 1064,1079,.22, 1093,1110,.19, 1110,1124,.06, 1132,1147,.46, 1155,1170,.56, 1177,1192,.36, 1197,1214,.3, 1237,1251,.35, 1273,1289,.35, 1303,1313,.11],
};

function hash(n: number) {
  const s = Math.sin(n * 12.9898) * 43758.5453;
  return s - Math.floor(s);
}

function Bars({ s, left, base }: { s: Series; left: number; base: number }) {
  const unit = 60.2;
  const out: React.ReactElement[] = [];
  if (s.steps) {
    for (let i = 0; i < s.pts.length; i += 3) {
      const [a, b, v] = [s.pts[i], s.pts[i + 1], s.pts[i + 2]];
      out.push(
        <rect key={i} x={left + a / 3} y={base - v * unit} width={(b - a) / 3} height={v * unit} fill={tone(v * 1.1)} />
      );
    }
    return <g>{out}</g>;
  }
  const first = s.pts[0];
  const last = s.pts[s.pts.length - 2];
  let k = 0;
  for (let x = first; x < last; x += 3) {
    while (s.pts[k + 2] < x) k += 2;
    const t = (x - s.pts[k]) / (s.pts[k + 2] - s.pts[k]);
    const v = s.pts[k + 1] + (s.pts[k + 3] - s.pts[k + 1]) * t;
    const w = v * (0.93 + hash(x) * 0.1);
    const px = Math.round(left + x / 3);
    out.push(<rect key={x} x={px} y={base - w * unit} width="1" height={w * unit} fill={tone(v)} />);
    if (hash(x + 7) > 0.7) {
      const tip = w * 1.08;
      out.push(<rect key={`t${x}`} x={px} y={base - tip * unit} width="1" height={tip * unit} fill={tone(v)} fillOpacity="0.4" />);
    }
    if (hash(x + 3) > 0.87) {
      out.push(<rect key={`s${x}`} x={px} y={base - w * unit} width="1" height={w * unit} fill="#fff" fillOpacity="0.28" />);
    }
  }
  return <g>{out}</g>;
}

function RatesChart() {
  const panels = [
    { s: alabama, x: 390, x0: 426, x1: 871, y: 2851, first: 437.3 },
    { s: alaska, x: 870, x0: 883, x1: 1328, y: 2851, first: 894 },
    { s: arizona, x: 390, x0: 426, x1: 871, y: 3105, first: 437.3 },
    { s: arkansas, x: 870, x0: 883, x1: 1328, y: 3105, first: 894 },
  ];
  return (
    <svg
      className="block h-[590px] w-[938px]"
      viewBox="395 2570 938 590"
      fontFamily="'Liberation Sans', Arial, sans-serif"
    >
      <text x="406" y="2601" fontSize="26" fontWeight="700" textLength="460" lengthAdjust="spacingAndGlyphs">
        Deaths per 100,000 people over time
      </text>
      {panels.map((p) => (
        <g key={p.s.name}>
          <g stroke="#e8e8e8" strokeWidth="2">
            {[0, 1, 2, 3].map((i) => (
              <path key={i} d={`M${p.x0},${p.y - i * 60.15} H${p.x1}`} />
            ))}
            {[0, 1, 2, 3].map((i) => (
              <path key={i} d={`M${p.first + i * 130.8},${p.y - 199} V${p.y + 9}`} />
            ))}
          </g>
          <Bars s={p.s} left={p.x} base={p.y} />
          <text x={(p.x0 + p.x1) / 2} y={p.y - 210} fontSize="18" fill="#1a1a1a" textAnchor="middle">
            {p.s.name}
          </text>
          {p.x0 < 500 &&
            [0, 1, 2, 3].map((i) => (
              <text key={i} x="415.5" y={p.y - i * 60.15 + 6.5} fontSize="17.6" fill="#4d4d4d" textAnchor="end">
                {i}
              </text>
            ))}
          {p.y > 3000 &&
            [0, 1, 2, 3].map((i) => (
              <text key={i} x={p.first + i * 130.8} y="3138" fontSize="17.6" fill="#4d4d4d" textAnchor="middle">
                {2020 + i}
              </text>
            ))}
        </g>
      ))}
    </svg>
  );
}

const rows = [
  ["Alabama", "0.32"],
  ["Alaska", "0.12"],
  ["Arizona", "0.07"],
  ["Arkansas", "0.09"],
];

export default function App() {
  return (
    <div className="h-[3824px] w-[1978px] overflow-hidden bg-white font-[Inter,sans-serif] text-[#333]">
      <nav className="flex h-[107px] items-center justify-between bg-[#0f2a36] pt-px pr-[37px] pl-[64px] text-[#d3d8da]">
        <a className="text-[35px] font-light tracking-[-0.013em]">COVID Website</a>
        <div className="flex gap-[48px] text-[30px] font-light tracking-[-0.018em]">
          <a>Home</a>
          <a>About</a>
        </div>
      </nav>
      <header className="h-[418px] border-b-[3px] border-[#e6e6e6] pt-[93px] pl-[395px] text-black">
        <h1 className="text-[98px] leading-[100px] font-bold tracking-[-0.018em]">COVID Website</h1>
        <p className="mt-[18px] w-[970px] text-[37px] leading-[60px] font-light tracking-[-0.012em]">
          Information about COVID rates in the United States over<br />time
        </p>
      </header>
      <main className="pl-[395px]">
        <h2 className="mt-[123px] text-[62px] leading-[51.2px] font-bold tracking-[-0.007em] whitespace-nowrap">
          COVID Death Rates as of March<br />1, 2023
        </h2>
        <p className="mt-[42px] text-[31px] leading-[51.2px] tracking-[-0.006em]">
          This table shows COVID death rates per 100,000 people in four<br />states states.
        </p>
        <div className="mt-[53.2px] ml-[313px] w-[318px] border-y-4 border-[#ccc] text-[31px] text-[#2b2b2b]">
          <div className="flex h-[77px] items-center justify-between border-b-4 border-[#ccc] px-[9px] font-bold tracking-[-0.034em]">
            <span>State</span>
            <span>Death rate</span>
          </div>
          {rows.map(([name, rate]) => (
            <div key={name} className="flex h-[85px] items-center justify-between border-b-2 border-[#ccc] px-[9px] pt-px last:h-[83px] last:border-b-0">
              <span className="tracking-[-0.009em]">{name}</span>
              <span className="tabular-nums">{rate}</span>
            </div>
          ))}
        </div>
        <p className="mt-[67px] text-[31px] leading-[51.2px] tracking-[-0.006em]">
          We can see this same death rate data for all states on a map.
        </p>
        <div className="mt-[10.8px]">
          <DeathMap />
        </div>
        <h2 className="mt-[83.3px] text-[62px] leading-[51.2px] font-bold tracking-[-0.007em] whitespace-nowrap">
          COVID Death Rates Over Time
        </h2>
        <p className="mt-[42px] text-[31px] leading-[51.2px] tracking-[-0.006em]">
          The following chart shows COVID death rates from the start of<br />COVID in early 2020 until March 1, 2023.
        </p>
        <div className="mt-[31.1px]">
          <RatesChart />
        </div>
      </main>
    </div>
  );
}
